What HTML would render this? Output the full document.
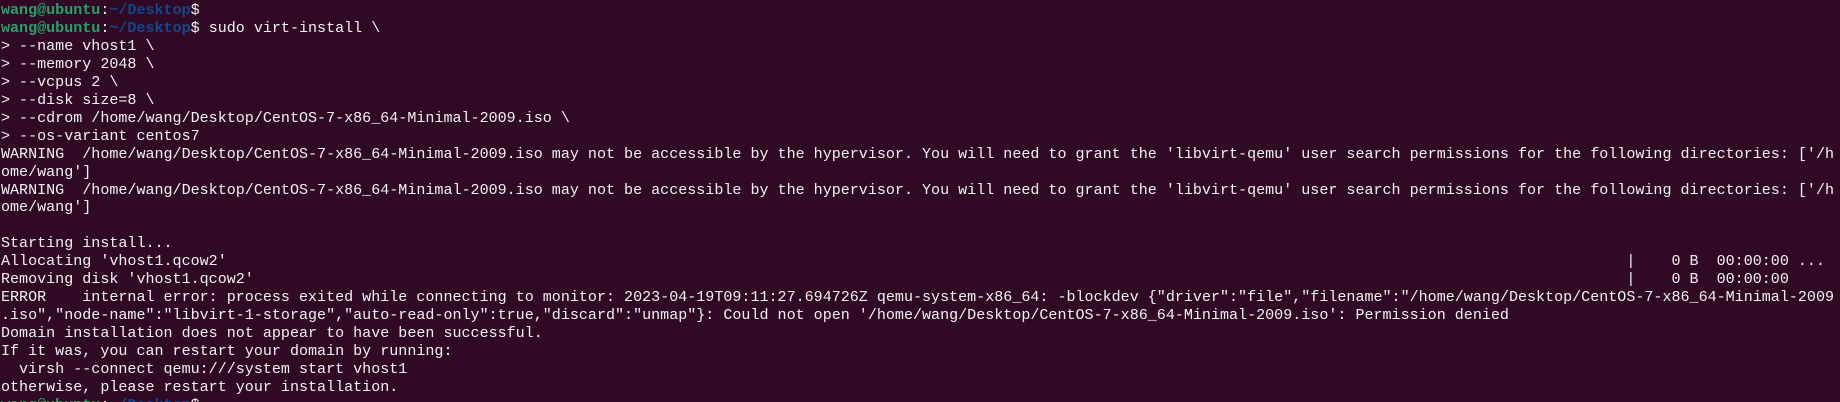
<!DOCTYPE html>
<html><head><meta charset="utf-8"><style>
html,body{margin:0;padding:0;background:#300a24;width:1840px;height:402px;overflow:hidden}
pre{margin:0;padding:2px 0 0 1px;font-family:"Liberation Mono",monospace;font-size:15.05px;line-height:17.95px;color:#f2f2f2;white-space:pre}
.g{color:#26a269;font-weight:bold}.b{color:#12488b;font-weight:bold}
</style></head><body><pre><span class="g">wang@ubuntu</span>:<span class="b">~/Desktop</span>$
<span class="g">wang@ubuntu</span>:<span class="b">~/Desktop</span>$ sudo virt-install \
&gt; --name vhost1 \
&gt; --memory 2048 \
&gt; --vcpus 2 \
&gt; --disk size=8 \
&gt; --cdrom /home/wang/Desktop/CentOS-7-x86_64-Minimal-2009.iso \
&gt; --os-variant centos7
WARNING  /home/wang/Desktop/CentOS-7-x86_64-Minimal-2009.iso may not be accessible by the hypervisor. You will need to grant the 'libvirt-qemu' user search permissions for the following directories: ['/h
ome/wang']
WARNING  /home/wang/Desktop/CentOS-7-x86_64-Minimal-2009.iso may not be accessible by the hypervisor. You will need to grant the 'libvirt-qemu' user search permissions for the following directories: ['/h
ome/wang']

Starting install...
Allocating 'vhost1.qcow2'                                                                                                                                                           |    0 B  00:00:00 ...
Removing disk 'vhost1.qcow2'                                                                                                                                                        |    0 B  00:00:00
ERROR    internal error: process exited while connecting to monitor: 2023-04-19T09:11:27.694726Z qemu-system-x86_64: -blockdev {"driver":"file","filename":"/home/wang/Desktop/CentOS-7-x86_64-Minimal-2009
.iso","node-name":"libvirt-1-storage","auto-read-only":true,"discard":"unmap"}: Could not open '/home/wang/Desktop/CentOS-7-x86_64-Minimal-2009.iso': Permission denied
Domain installation does not appear to have been successful.
If it was, you can restart your domain by running:
  virsh --connect qemu:///system start vhost1
otherwise, please restart your installation.
<span class="g">wang@ubuntu</span>:<span class="b">~/Desktop</span>$
</pre></body></html>
